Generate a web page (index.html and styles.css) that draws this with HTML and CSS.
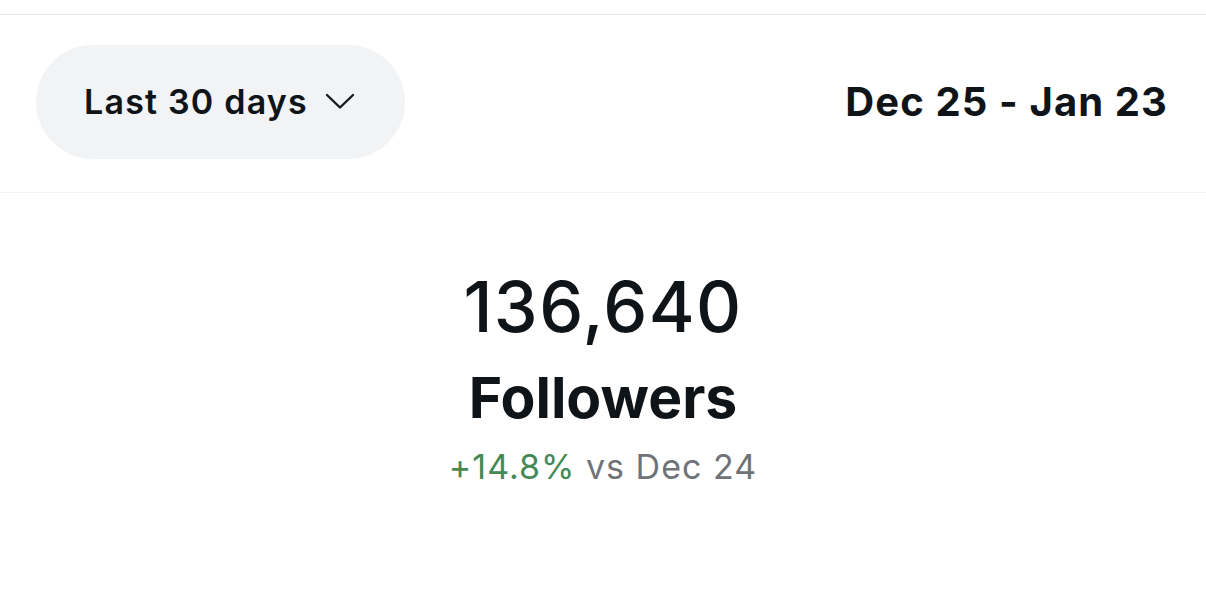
FILE: index.html
```html
<!DOCTYPE html>
<html lang="en">
<head>
<meta charset="utf-8">
<link rel="stylesheet" href="styles.css">
</head>
<body>
<div class="page">
  <div class="toolbar">
    <button class="range-pill" type="button">
      <span class="range-label">Last 30 days</span>
      <svg class="chevron" width="30" height="17" viewBox="0 0 30 17" fill="none"><path d="M2 2 L15 14.5 L28 2" stroke="#16181c" stroke-width="2.4" stroke-linecap="round" stroke-linejoin="round"/></svg>
    </button>
    <div class="date-range">Dec 25 - Jan 23</div>
  </div>
  <div class="stat">
    <div class="stat-value">136,640</div>
    <div class="stat-label">Followers</div>
    <div class="stat-change"><span class="up">+14.8%</span> vs Dec 24</div>
  </div>
</div>
</body>
</html>
```
FILE: styles.css
```css
* { box-sizing: border-box; }
html, body { margin: 0; padding: 0; background: #ffffff; }
body {
  font-family: Inter, "Noto Sans", "Liberation Sans", sans-serif;
  color: #0f1419;
}
.page {
  width: 1206px;
  height: 592px;
  padding-top: 14px;
}
.toolbar {
  display: flex;
  align-items: center;
  justify-content: space-between;
  border-top: 1px solid #e7e8ea;
  border-bottom: 1px solid #f1f2f3;
  height: 179px;
  padding: 0 38px 4px 36px;
}
.range-pill {
  display: flex;
  align-items: center;
  gap: 17px;
  height: 114px;
  width: 369px;
  padding: 0 0 0 48px;
  border: none;
  border-radius: 57px;
  background: #f1f3f5;
  font-family: inherit;
  color: #0f1419;
}
.range-label {
  font-size: 34px;
  font-weight: 600;
  letter-spacing: 1.2px;
}
.chevron { margin-top: 0px; }
.date-range {
  font-size: 40px;
  font-weight: 700;
  letter-spacing: 1.1px;
}
.stat {
  display: flex;
  flex-direction: column;
  align-items: center;
  padding-top: 72px;
}
.stat-value {
  font-size: 70px;
  font-weight: 500;
  line-height: 84px;
  letter-spacing: 1.4px;
}
.stat-label {
  font-size: 57px;
  font-weight: 700;
  line-height: 66px;
  margin-top: 16px;
}
.stat-change {
  font-size: 34px;
  line-height: 44px;
  color: #6f7378;
  margin-top: 14px;
  letter-spacing: 1px;
}
.stat-change .up { color: #438a57; }
```
